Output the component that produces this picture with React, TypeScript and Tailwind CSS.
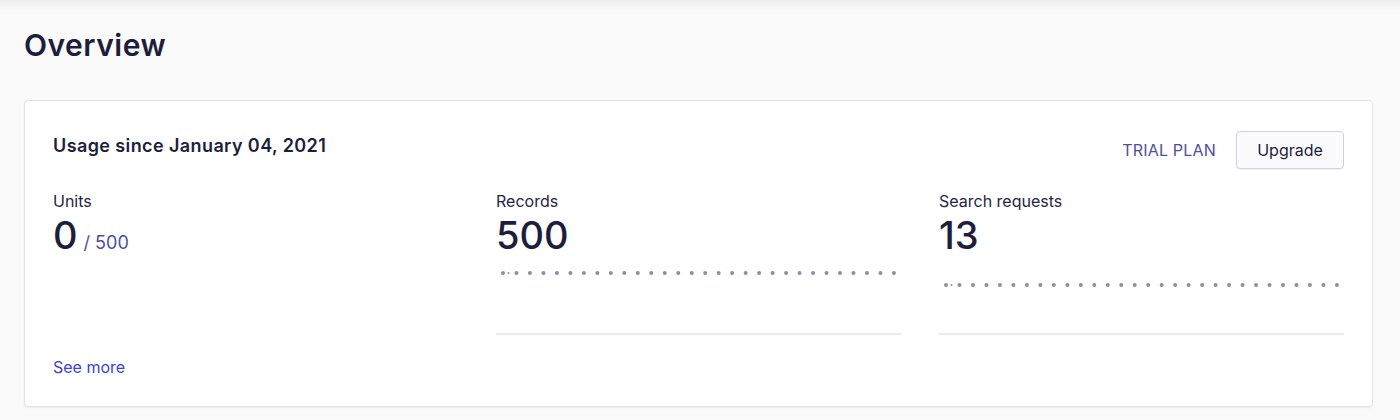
const stats = [
  { label: "Units", value: "0", limit: "/ 500", chart: null },
  { label: "Records", value: "500", limit: null, chart: 16 },
  { label: "Search requests", value: "13", limit: null, chart: 28 },
];

const DotLine = ({ y }: { y: number }) => (
  <svg width="100%" height="76" className="block">
    <line
      x1="7"
      y1={y}
      x2="398"
      y2={y}
      stroke="#8c8da6"
      strokeWidth="4"
      strokeLinecap="round"
      strokeDasharray="0 13.48"
    />
    <circle cx="12.5" cy={y} r="1" fill="#8c8da6" />
  </svg>
);

const App = () => {
  return (
    <div
      className="min-h-[420px] bg-[#fafafa] text-[#1d1e3c]"
      style={{ fontFamily: "Inter, 'Noto Sans', sans-serif" }}
    >
      <div className="h-[10px] bg-gradient-to-b from-[#ededed] to-[#fafafa]" />
      <div className="px-6">
        <h1 className="mt-[16px] text-[30px] leading-[38px] font-semibold tracking-[0.5px]">Overview</h1>

        <div className="mt-[36px] w-[1349px] rounded bg-white border border-[#e3e3e6] shadow-[0_1px_2px_rgba(0,0,0,0.06)] px-7 pt-[30px] pb-[27px]">
          <div className="flex items-start justify-between">
            <h2 className="mt-[3px] text-[18px] leading-6 font-semibold tracking-[0.4px]">Usage since January 04, 2021</h2>
            <div className="flex items-center gap-5">
              <span className="text-[16px] text-[#4d4f9c] tracking-[0.2px]">TRIAL PLAN</span>
              <button className="h-[38px] w-[108px] rounded border border-[#cfcfea] bg-[#fbfbfe] text-[16px] text-[#1d1e3c] shadow-[0_1px_1px_rgba(0,0,0,0.05)]">
                Upgrade
              </button>
            </div>
          </div>

          <div className="mt-5 grid grid-cols-3 gap-[38px]">
            {stats.map((s) => (
              <div key={s.label}>
                <div className="text-[16px] leading-6 text-[#25263f]">{s.label}</div>
                <div className="flex items-baseline gap-1.5">
                  <span className="text-[38px] leading-[44px] font-medium">{s.value}</span>
                  {s.limit && <span className="text-[18px] text-[#4d4f9c]">{s.limit}</span>}
                </div>
                {s.chart !== null && (
                  <div className="border-b-2 border-[#ebebef]">
                    <DotLine y={s.chart} />
                  </div>
                )}
              </div>
            ))}
          </div>

          <a href="#" className="mt-5 inline-block text-[16px] leading-6 text-[#3a42d4]">
            See more
          </a>
        </div>
      </div>
    </div>
  );
};

export default App;
